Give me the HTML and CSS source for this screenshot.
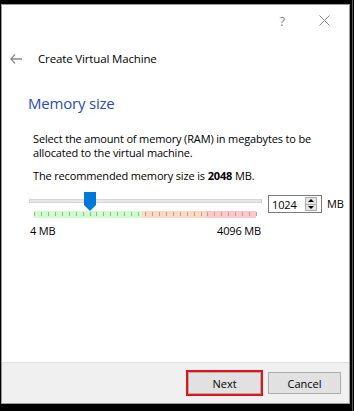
FILE: index.html
```html
<!DOCTYPE html>
<html>
    <head>
        <meta charset="utf-8">
        <title>Create Virtual Machine</title>
        <link rel="stylesheet" href="styles.css">
    </head>
    <body>
        <div class="window">
            <!-- title bar -->
            <div class="titlebar">
                <span class="tb-help">?</span>
                <svg class="tb-close" width="11" height="11" viewBox="0 0 11 11">
                    <path d="M0.5 0.5 L10.5 10.5 M10.5 0.5 L0.5 10.5" stroke="#8a8a8a" stroke-width="1" fill="none"/>
                </svg>
            </div>

            <!-- wizard header -->
            <div class="wiz-header">
                <svg class="back" width="12" height="10" viewBox="0 0 12 10">
                    <path d="M5 0.5 L0.8 5 L5 9.5 M0.8 5 H12" stroke="#8a8a8a" stroke-width="1.3" fill="none"/>
                </svg>
                <span class="wiz-title">Create Virtual Machine</span>
            </div>

            <!-- page body -->
            <div class="page">
                <h1 class="page-title">Memory size</h1>
                <p class="desc">Select the amount of memory (RAM) in megabytes to be allocated to the virtual machine.</p>
                <p class="recommend">The recommended memory size is <b>2048</b> MB.</p>

                <div class="mem-row">
                    <div class="slider">
                        <div class="groove"></div>
                        <svg class="handle" width="12" height="19" viewBox="0 0 12 19">
                            <path d="M0 0 H12 V13 L6 19 L0 13 Z" fill="#0078d7"/>
                        </svg>
                        <div class="scale">
                            <div class="zone green"></div>
                            <div class="zone orange"></div>
                            <div class="zone red"></div>
                        </div>
                    </div>
                    <div class="spin">
                        <span class="spin-val">1024</span>
                        <div class="spin-btns">
                            <div class="spin-btn"><span class="arrow-up"></span></div>
                            <div class="spin-btn"><span class="arrow-down"></span></div>
                        </div>
                    </div>
                    <span class="unit">MB</span>
                </div>

                <div class="scale-labels">
                    <span>4 MB</span>
                    <span>4096 MB</span>
                </div>
            </div>

            <!-- buttons -->
            <div class="footer">
                <button class="btn btn-focus">Next</button>
                <button class="btn">Cancel</button>
            </div>
        </div>
        <div class="edge"></div>
    </body>
</html>
```

FILE: styles.css
```css
*{
    margin: 0px;
    padding: 0px;
    box-sizing: border-box;
}
html, body{
    height: 100%;
}
body{
    background-color: #000;
    font-family: "Open Sans", "Noto Sans", sans-serif;
    font-size: 11px;
    letter-spacing: -0.15px;
    color: #000;
    overflow: hidden;
    position: relative;
}

/* window */
.window{
    position: absolute;
    left: 1px;
    top: 4px;
    width: 349px;
    height: 400px;
    background-color: #fff;
    border: 1px solid #9a9a9a;
    display: flex;
    flex-direction: column;
}
.edge{
    position: absolute;
    left: 352px;
    top: 0px;
    width: 1px;
    height: 100%;
    background-color: #555;
}

/* title bar */
.titlebar{
    height: 31px;
    display: flex;
    align-items: center;
    justify-content: flex-end;
    padding-right: 19px;
}
.tb-help{
    font-size: 13px;
    color: #8a8a8a;
    margin-right: 34px;
}
.tb-close{
    display: block;
}

/* wizard header */
.wiz-header{
    height: 45px;
    display: flex;
    align-items: center;
    padding-left: 8px;
}
.back{
    display: block;
    margin-right: 16px;
}
.wiz-title{
    font-size: 11.5px;
}

/* page body */
.page{
    flex: 1;
    padding-left: 26px;
}
.page-title{
    font-weight: normal;
    font-size: 15px;
    letter-spacing: -0.2px;
    color: #2a4ab8;
    height: 20px;
    line-height: 20px;
    margin-top: 12px;
}
.desc{
    margin-top: 19px;
    padding-left: 5px;
    width: 300px;
    line-height: 14px;
}
.recommend{
    margin-top: 9px;
    padding-left: 5px;
    line-height: 14px;
}

/* memory slider row */
.mem-row{
    margin-top: 9px;
    display: flex;
    align-items: flex-start;
}
.slider{
    position: relative;
    width: 233px;
    height: 27px;
    margin-left: 1px;
}
.groove{
    position: absolute;
    left: 0px;
    top: 7px;
    width: 233px;
    height: 4px;
    background-color: #e7e7e7;
    border: 1px solid #d6d6d6;
}
.handle{
    position: absolute;
    left: 55px;
    top: 0px;
}
.scale{
    position: absolute;
    left: 5px;
    top: 19px;
    width: 222px;
    height: 7px;
    display: flex;
}
.scale::after{
    content: "";
    position: absolute;
    left: 0px;
    top: 1px;
    width: 223px;
    height: 4px;
    background-image: repeating-linear-gradient(to right, #a8a8a8 0px, #a8a8a8 1px, transparent 1px, transparent 6.94px);
}
.zone{
    height: 100%;
}
.green{
    width: 108px;
    background-color: #ccffcc;
}
.orange{
    width: 64px;
    background-color: #ffd8c2;
}
.red{
    width: 50px;
    background-color: #ffc8c8;
}

/* spin box */
.spin{
    margin-left: 6px;
    margin-top: 3px;
    width: 54px;
    height: 18px;
    border: 1px solid #7a7a7a;
    display: flex;
    align-items: center;
    justify-content: space-between;
    padding: 0px 4px 0px 3px;
}
.spin-btns{
    width: 12px;
    height: 14px;
    border: 1px solid #adadad;
    background-color: #e5e5e5;
    display: flex;
    flex-direction: column;
}
.spin-btn{
    flex: 1;
    display: flex;
    align-items: center;
    justify-content: center;
}
.spin-btn + .spin-btn{
    border-top: 1px solid #adadad;
}
.arrow-up{
    border-left: 3px solid transparent;
    border-right: 3px solid transparent;
    border-bottom: 3px solid #000;
}
.arrow-down{
    border-left: 3px solid transparent;
    border-right: 3px solid transparent;
    border-top: 3px solid #000;
}
.unit{
    margin-left: 5px;
    margin-top: 4px;
}
.scale-labels{
    width: 233px;
    display: flex;
    justify-content: space-between;
    margin-top: 4px;
    padding-left: 2px;
}

/* footer buttons */
.footer{
    height: 41px;
    background-color: #f0f0f0;
    border-top: 1px solid #dfdfdf;
    display: flex;
    justify-content: flex-end;
    align-items: flex-start;
    padding: 9px 8px 0px 0px;
    gap: 7px;
}
.btn{
    width: 73px;
    height: 22px;
    background-color: #e1e1e1;
    border: 1px solid #adadad;
    font-family: "Open Sans", "Noto Sans", sans-serif;
    font-size: 11px;
    color: #000;
}
.btn-focus{
    outline: 2px solid #e8101a;
}
```
